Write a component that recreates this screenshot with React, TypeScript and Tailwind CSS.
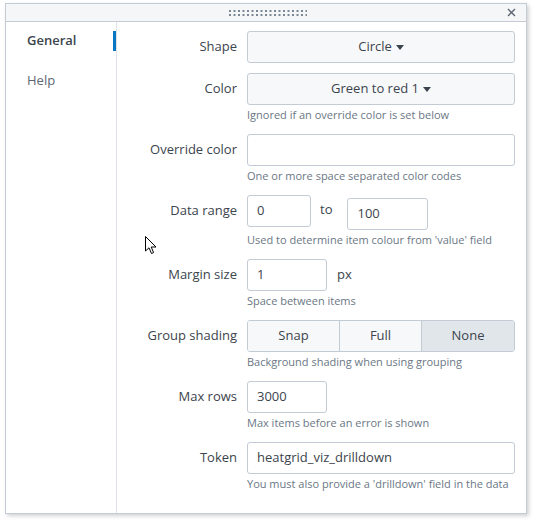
import React from 'react';

const Caret = () => (
  <svg width="8" height="5" viewBox="0 0 8 5" className="ml-[4px] inline-block">
    <path d="M0 0 H8 L4 5 Z" fill="#3c444d" />
  </svg>
);

const Grip = () => (
  <svg width="78" height="7" viewBox="0 0 78 7">
    {Array.from({ length: 18 }).map((_, i) => (
      <g key={i} fill="#7b8794">
        <rect x={i * 4.5} y={0} width={2} height={2} />
        <rect x={i * 4.5} y={4} width={2} height={2} />
      </g>
    ))}
  </svg>
);

const Help = ({ children }: { children: React.ReactNode }) => (
  <div className="h-[19px] pt-[2px] text-[11px] leading-[16px] text-[#6b7785]">{children}</div>
);

const Row = ({ label, children, help }: { label: string; children: React.ReactNode; help?: string }) => (
  <div className="flex mb-[10px]">
    <div className="w-[120px] h-[32px] flex items-center justify-end text-[13px] text-[#3c444d]">{label}</div>
    <div className="ml-[10px] w-[268px]">
      {children}
      {help && <Help>{help}</Help>}
    </div>
  </div>
);

const inputCls =
  'h-[32px] border border-[#c3cbd4] rounded-[3px] bg-white px-[9px] flex items-center text-[13px] text-[#3c444d]';

export default function App() {
  return (
    <div className="w-[537px] h-[523px] bg-white relative" style={{ fontFamily: '"Open Sans", sans-serif' }}>
      <div className="absolute left-[5px] top-[3px] w-[522px] h-[511px] border border-[#c3cbd4] bg-white shadow-[2px_2px_4px_rgba(0,0,0,0.18)] flex flex-col">
        {/* header */}
        <div className="h-[18px] shrink-0 bg-[#f5f6f8] border-b border-[#c3cbd4] flex items-center justify-center relative">
          <div className="ml-[4px] mt-[1px]"><Grip /></div>
          <svg width="9" height="9" viewBox="0 0 9 9" className="absolute right-[10px] top-[4px]">
            <path d="M1 1 L8 8 M8 1 L1 8" stroke="#5c6773" strokeWidth="1.4" />
          </svg>
        </div>
        <div className="flex flex-1">
          {/* sidebar */}
          <div className="w-[111px] shrink-0 border-r border-[#dfe3e8] pt-[9px]">
            <div className="relative h-[20px] flex items-center pl-[21px] text-[13px] font-semibold text-[#3c444d]">
              General
              <div className="absolute right-0 top-0 w-[3px] h-[20px] bg-[#0a77c2]" />
            </div>
            <div className="h-[20px] mt-[20px] flex items-center pl-[21px] text-[13px] text-[#5c6773]">Help</div>
          </div>
          {/* form */}
          <div className="flex-1 pt-[9px]">
            <Row label="Shape">
              <div className="h-[32px] border border-[#c3cbd4] rounded-[3px] bg-[#f7f8fa] flex items-center justify-center text-[13px] text-[#3c444d]">
                Circle <Caret />
              </div>
            </Row>
            <Row label="Color" help="Ignored if an override color is set below">
              <div className="h-[32px] border border-[#c3cbd4] rounded-[3px] bg-[#f7f8fa] flex items-center justify-center text-[13px] text-[#3c444d]">
                Green to red 1 <Caret />
              </div>
            </Row>
            <Row label="Override color" help="One or more space separated color codes">
              <div className={inputCls} />
            </Row>
            <Row label="Data range" help="Used to determine item colour from 'value' field">
              <div className="flex items-start">
                <div className={inputCls + ' w-[64px]'}>0</div>
                <div className="h-[30px] flex items-center ml-[9px] text-[13px] text-[#3c444d]">to</div>
                <div className={inputCls + ' w-[81px] ml-[15px] mt-[3px]'}>100</div>
              </div>
            </Row>
            <Row label="Margin size" help="Space between items">
              <div className="flex items-center">
                <div className={inputCls + ' w-[80px]'}>1</div>
                <div className="ml-[10px] text-[13px] text-[#3c444d]">px</div>
              </div>
            </Row>
            <Row label="Group shading" help="Background shading when using grouping">
              <div className="h-[32px] flex border border-[#c3cbd4] rounded-[3px] overflow-hidden text-[13px] text-[#3c444d]">
                <div className="w-[92px] bg-[#f7f8fa] flex items-center justify-center border-r border-[#c3cbd4]">Snap</div>
                <div className="w-[82px] bg-[#f7f8fa] flex items-center justify-center border-r border-[#c3cbd4]">Full</div>
                <div className="flex-1 bg-[#e1e6eb] flex items-center justify-center">None</div>
              </div>
            </Row>
            <Row label="Max rows" help="Max items before an error is shown">
              <div className={inputCls + ' w-[80px]'}>3000</div>
            </Row>
            <Row label="Token" help="You must also provide a 'drilldown' field in the data">
              <div className={inputCls}>heatgrid_viz_drilldown</div>
            </Row>
          </div>
        </div>
      </div>
      {/* mouse cursor */}
      <svg width="13" height="19" viewBox="0 0 13 19" className="absolute left-[145px] top-[236px]">
        <path d="M0.5 0.5 L0.5 15 L4 11.8 L6.5 17.5 L8.6 16.6 L6.2 11 L11 11 Z" fill="white" stroke="#000" strokeWidth="1" strokeLinejoin="miter" />
      </svg>
    </div>
  );
}
